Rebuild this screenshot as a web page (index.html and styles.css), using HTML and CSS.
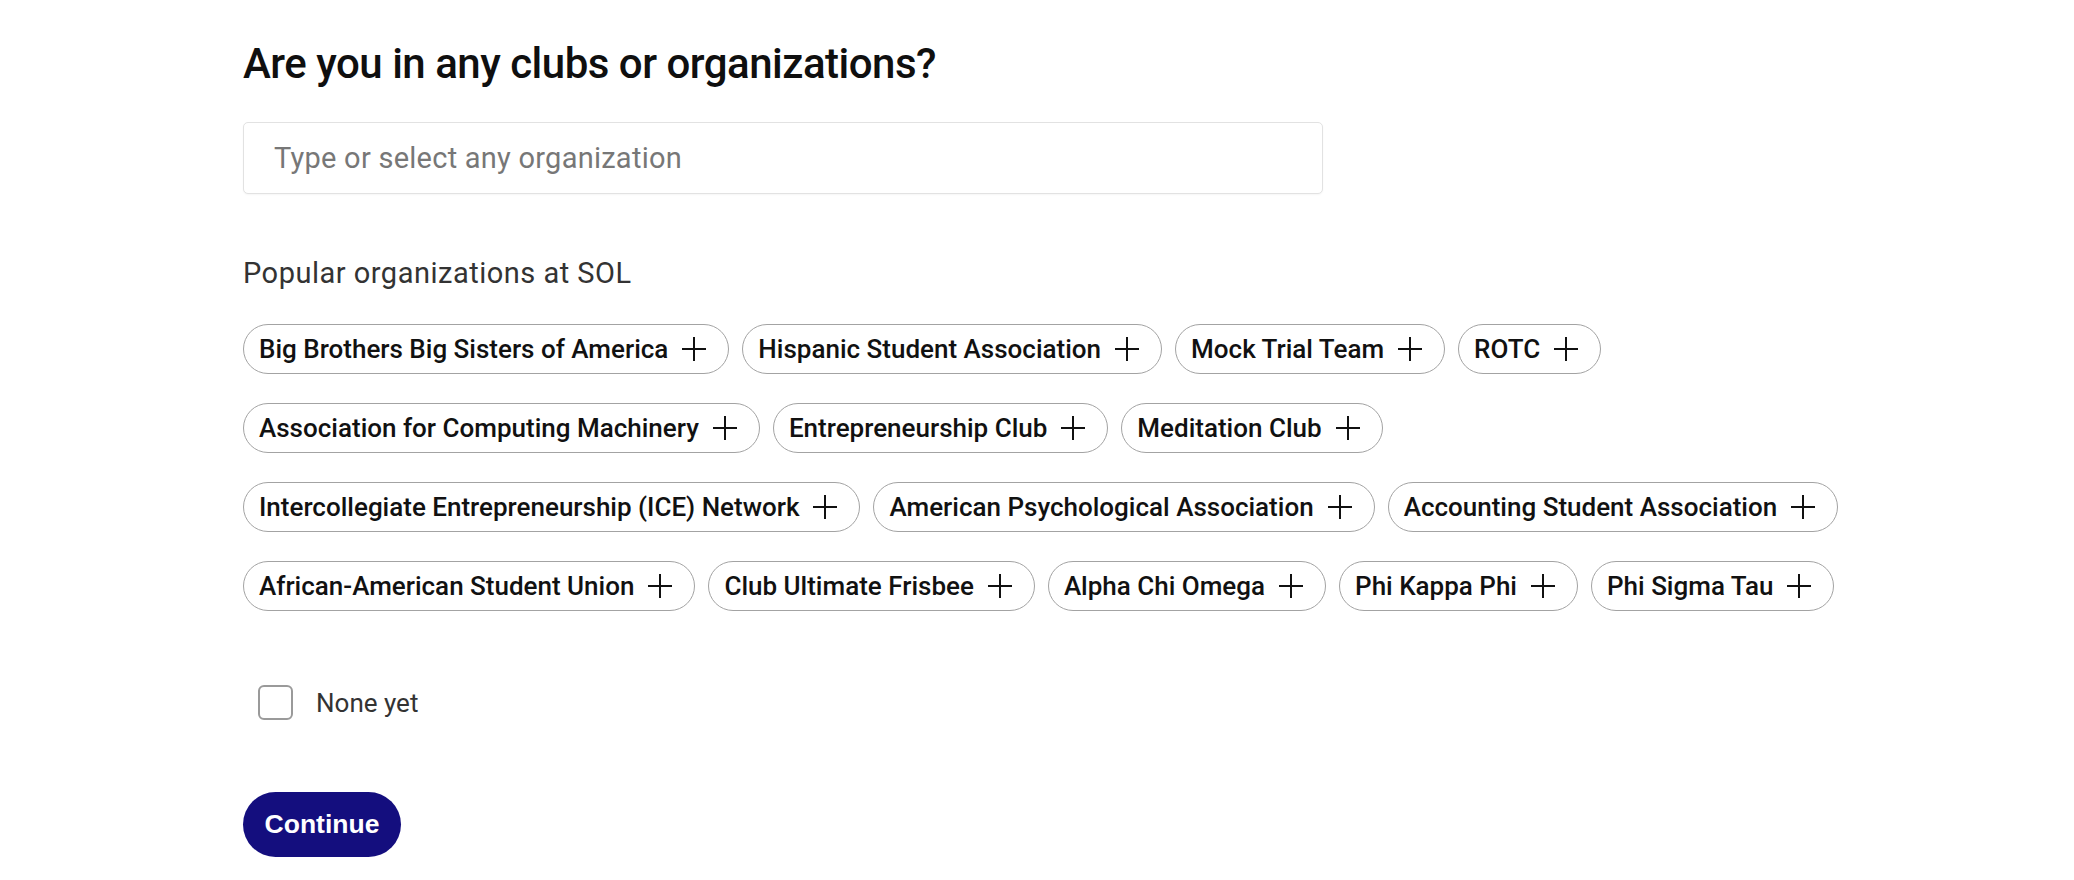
FILE: index.html
```html
<!DOCTYPE html>
<html lang="en">
<head>
<meta charset="utf-8">
<title>Clubs and organizations</title>
<link rel="stylesheet" href="styles.css">
</head>
<body>
<main class="page">
  <h1 class="title">Are you in any clubs or organizations?</h1>
  <div class="search">
    <input class="search-input" type="text" placeholder="Type or select any organization">
  </div>
  <h2 class="label">Popular organizations at SOL</h2>
  <ul class="chips">
    <li class="chip"><span>Big Brothers Big Sisters of America</span><svg class="plus" viewBox="0 0 26 26"><path d="M13 1v24M1 13h24"/></svg></li>
    <li class="chip"><span>Hispanic Student Association</span><svg class="plus" viewBox="0 0 26 26"><path d="M13 1v24M1 13h24"/></svg></li>
    <li class="chip"><span>Mock Trial Team</span><svg class="plus" viewBox="0 0 26 26"><path d="M13 1v24M1 13h24"/></svg></li>
    <li class="chip"><span>ROTC</span><svg class="plus" viewBox="0 0 26 26"><path d="M13 1v24M1 13h24"/></svg></li>
    <li class="chip"><span>Association for Computing Machinery</span><svg class="plus" viewBox="0 0 26 26"><path d="M13 1v24M1 13h24"/></svg></li>
    <li class="chip"><span>Entrepreneurship Club</span><svg class="plus" viewBox="0 0 26 26"><path d="M13 1v24M1 13h24"/></svg></li>
    <li class="chip"><span>Meditation Club</span><svg class="plus" viewBox="0 0 26 26"><path d="M13 1v24M1 13h24"/></svg></li>
    <li class="chip"><span>Intercollegiate Entrepreneurship (ICE) Network</span><svg class="plus" viewBox="0 0 26 26"><path d="M13 1v24M1 13h24"/></svg></li>
    <li class="chip"><span>American Psychological Association</span><svg class="plus" viewBox="0 0 26 26"><path d="M13 1v24M1 13h24"/></svg></li>
    <li class="chip"><span>Accounting Student Association</span><svg class="plus" viewBox="0 0 26 26"><path d="M13 1v24M1 13h24"/></svg></li>
    <li class="chip"><span>African-American Student Union</span><svg class="plus" viewBox="0 0 26 26"><path d="M13 1v24M1 13h24"/></svg></li>
    <li class="chip"><span>Club Ultimate Frisbee</span><svg class="plus" viewBox="0 0 26 26"><path d="M13 1v24M1 13h24"/></svg></li>
    <li class="chip"><span>Alpha Chi Omega</span><svg class="plus" viewBox="0 0 26 26"><path d="M13 1v24M1 13h24"/></svg></li>
    <li class="chip"><span>Phi Kappa Phi</span><svg class="plus" viewBox="0 0 26 26"><path d="M13 1v24M1 13h24"/></svg></li>
    <li class="chip"><span>Phi Sigma Tau</span><svg class="plus" viewBox="0 0 26 26"><path d="M13 1v24M1 13h24"/></svg></li>
  </ul>
  <label class="none">
    <span class="box"></span>
    <span class="none-text">None yet</span>
  </label>
  <button class="continue" type="button">Continue</button>
</main>
</body>
</html>
```
FILE: styles.css
```css
html, body {
  margin: 0;
  padding: 0;
  background: #ffffff;
}
body {
  font-family: Roboto, "Liberation Sans", Arial, sans-serif;
  color: #111111;
}
.page {
  padding: 39px 0 0 243px;
  width: 1680px;
}
.title {
  margin: 0;
  font-size: 42px;
  line-height: 50px;
  font-weight: 500;
  letter-spacing: -0.5px;
  color: #0f0f0f;
}
.search {
  margin-top: 33px;
  width: 1080px;
}
.search-input {
  box-sizing: border-box;
  width: 100%;
  height: 72px;
  border: 1px solid #e2e2e2;
  border-radius: 5px;
  padding: 0 30px;
  font-family: inherit;
  font-size: 29px;
  letter-spacing: 0.25px;
  color: #111;
  outline: none;
  box-shadow: 0 1px 2px rgba(0,0,0,0.04);
}
.search-input::placeholder {
  color: #777777;
}
.label {
  margin: 62px 0 0 0;
  font-size: 29px;
  line-height: 34px;
  font-weight: 400;
  letter-spacing: 0.5px;
  color: #333333;
}
.chips {
  list-style: none;
  margin: 34px 0 0 0;
  padding: 0;
  display: flex;
  flex-wrap: wrap;
  column-gap: 13px;
  row-gap: 29px;
}
.chip {
  box-sizing: border-box;
  height: 50px;
  display: flex;
  align-items: center;
  gap: 13px;
  padding: 0 21px 0 15px;
  border: 1px solid #a3a3a3;
  border-radius: 25px;
  font-size: 26px;
  font-weight: 500;
  color: #111111;
  white-space: nowrap;
}
.plus {
  width: 26px;
  height: 26px;
  flex: none;
}
.plus path {
  stroke: #111111;
  stroke-width: 2;
  fill: none;
}
.none {
  display: flex;
  align-items: center;
  gap: 23px;
  margin: 74px 0 0 15px;
}
.box {
  box-sizing: border-box;
  width: 35px;
  height: 35px;
  border: 2px solid #9a9a9a;
  border-radius: 6px;
}
.none-text {
  font-size: 26px;
  color: #333333;
}
.continue {
  display: block;
  margin-top: 72px;
  width: 158px;
  height: 65px;
  border: none;
  border-radius: 33px;
  background: #140e7e;
  color: #ffffff;
  font-family: "Liberation Sans", Arial, sans-serif;
  font-size: 26.5px;
  font-weight: 700;
  padding: 0;
}
```
